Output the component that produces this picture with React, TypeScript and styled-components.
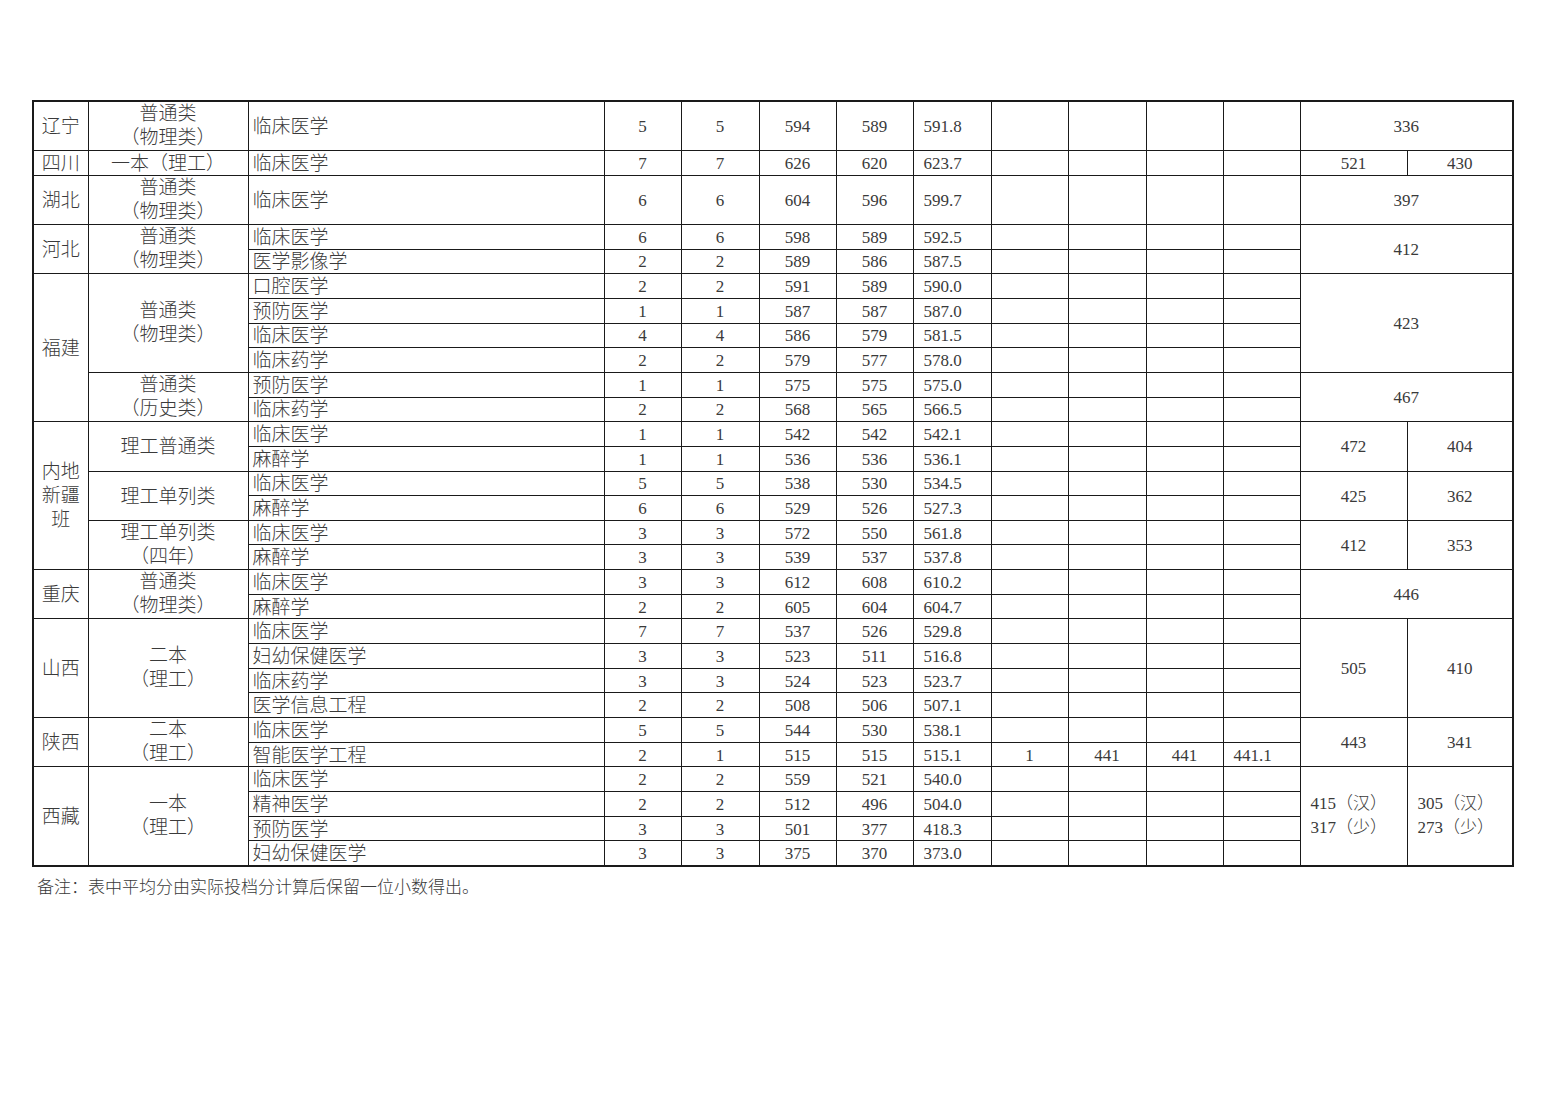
import React from 'react';
import styled, { createGlobalStyle } from 'styled-components';

const Global = createGlobalStyle`
  html, body {
    margin: 0;
    padding: 0;
    background: #fff;
  }
  body {
    font-family: "Liberation Serif", "Noto Sans CJK SC", serif;
    color: #333;
  }
`;

const Page = styled.div`
  padding: 100px 0 0 32px;
  width: 1480px;
`;

const Table = styled.table`
  width: 1480px;
  table-layout: fixed;
  border-collapse: collapse;
  border: 2px solid #1a1a1a;
`;

const Row = styled.tr<{ $tall?: boolean }>`
  height: ${(p) => (p.$tall ? '49.3px' : '24.66px')};
`;

const Cell = styled.td<{ $align?: 'left' | 'center'; $pad?: number; $cjk?: boolean; $multi?: boolean }>`
  border: 1.6px solid #1a1a1a;
  padding: ${(p) => (p.$multi ? 0 : 1)}px 0 0 ${(p) => p.$pad ?? 0}px;
  text-align: ${(p) => p.$align ?? 'center'};
  vertical-align: middle;
  font-size: ${(p) => (p.$cjk ? '19px' : '17px')};
  font-weight: 300;
  line-height: ${(p) => (p.$multi ? 24 : 21)}px;
  white-space: pre-line;
  overflow: hidden;
  color: #3a3a3a;
`;

const Note = styled.p`
  margin: 6px 0 0 5px;
  font-size: 17px;
  font-weight: 300;
  color: #3a3a3a;
`;

type Line = { span: number; vals: string[]; left?: boolean };
type Data = {
  prov?: [string, number];
  cat?: [string, number];
  major: string;
  n: string[];
  extra?: string[];
  tall?: boolean;
  line?: Line;
};

const rows: Data[] = [
  { prov: ['辽宁', 1], cat: ['普通类\n（物理类）', 1], major: '临床医学', n: ['5', '5', '594', '589', '591.8'], tall: true, line: { span: 1, vals: ['336'] } },
  { prov: ['四川', 1], cat: ['一本（理工）', 1], major: '临床医学', n: ['7', '7', '626', '620', '623.7'], line: { span: 1, vals: ['521', '430'] } },
  { prov: ['湖北', 1], cat: ['普通类\n（物理类）', 1], major: '临床医学', n: ['6', '6', '604', '596', '599.7'], tall: true, line: { span: 1, vals: ['397'] } },
  { prov: ['河北', 2], cat: ['普通类\n（物理类）', 2], major: '临床医学', n: ['6', '6', '598', '589', '592.5'], line: { span: 2, vals: ['412'] } },
  { major: '医学影像学', n: ['2', '2', '589', '586', '587.5'] },
  { prov: ['福建', 6], cat: ['普通类\n（物理类）', 4], major: '口腔医学', n: ['2', '2', '591', '589', '590.0'], line: { span: 4, vals: ['423'] } },
  { major: '预防医学', n: ['1', '1', '587', '587', '587.0'] },
  { major: '临床医学', n: ['4', '4', '586', '579', '581.5'] },
  { major: '临床药学', n: ['2', '2', '579', '577', '578.0'] },
  { cat: ['普通类\n（历史类）', 2], major: '预防医学', n: ['1', '1', '575', '575', '575.0'], line: { span: 2, vals: ['467'] } },
  { major: '临床药学', n: ['2', '2', '568', '565', '566.5'] },
  { prov: ['内地\n新疆\n班', 6], cat: ['理工普通类', 2], major: '临床医学', n: ['1', '1', '542', '542', '542.1'], line: { span: 2, vals: ['472', '404'] } },
  { major: '麻醉学', n: ['1', '1', '536', '536', '536.1'] },
  { cat: ['理工单列类', 2], major: '临床医学', n: ['5', '5', '538', '530', '534.5'], line: { span: 2, vals: ['425', '362'] } },
  { major: '麻醉学', n: ['6', '6', '529', '526', '527.3'] },
  { cat: ['理工单列类\n（四年）', 2], major: '临床医学', n: ['3', '3', '572', '550', '561.8'], line: { span: 2, vals: ['412', '353'] } },
  { major: '麻醉学', n: ['3', '3', '539', '537', '537.8'] },
  { prov: ['重庆', 2], cat: ['普通类\n（物理类）', 2], major: '临床医学', n: ['3', '3', '612', '608', '610.2'], line: { span: 2, vals: ['446'] } },
  { major: '麻醉学', n: ['2', '2', '605', '604', '604.7'] },
  { prov: ['山西', 4], cat: ['二本\n（理工）', 4], major: '临床医学', n: ['7', '7', '537', '526', '529.8'], line: { span: 4, vals: ['505', '410'] } },
  { major: '妇幼保健医学', n: ['3', '3', '523', '511', '516.8'] },
  { major: '临床药学', n: ['3', '3', '524', '523', '523.7'] },
  { major: '医学信息工程', n: ['2', '2', '508', '506', '507.1'] },
  { prov: ['陕西', 2], cat: ['二本\n（理工）', 2], major: '临床医学', n: ['5', '5', '544', '530', '538.1'], line: { span: 2, vals: ['443', '341'] } },
  { major: '智能医学工程', n: ['2', '1', '515', '515', '515.1'], extra: ['1', '441', '441', '441.1'] },
  { prov: ['西藏', 4], cat: ['一本\n（理工）', 4], major: '临床医学', n: ['2', '2', '559', '521', '540.0'], line: { span: 4, vals: ['415（汉）\n317（少）', '305（汉）\n273（少）'], left: true } },
  { major: '精神医学', n: ['2', '2', '512', '496', '504.0'] },
  { major: '预防医学', n: ['3', '3', '501', '377', '418.3'] },
  { major: '妇幼保健医学', n: ['3', '3', '375', '370', '373.0'] },
];

const widths = [55, 160, 356, 77, 78, 77, 77, 78, 77, 78, 77, 77, 107, 106];

const isMulti = (s: string) => s.includes('\n');

export default function App() {
  return (
    <Page>
      <Global />
      <Table>
        <colgroup>
          {widths.map((w, i) => (
            <col key={i} style={{ width: w }} />
          ))}
        </colgroup>
        <tbody>
          {rows.map((r, i) => {
            const extra = r.extra ?? ['', '', '', ''];
            return (
              <Row key={i} $tall={r.tall}>
                {r.prov && (
                  <Cell rowSpan={r.prov[1]} $cjk $multi={isMulti(r.prov[0])}>
                    {r.prov[0]}
                  </Cell>
                )}
                {r.cat && (
                  <Cell rowSpan={r.cat[1]} $cjk $multi={isMulti(r.cat[0])}>
                    {r.cat[0]}
                  </Cell>
                )}
                <Cell $align="left" $pad={4} $cjk>
                  {r.major}
                </Cell>
                {r.n.map((v, j) => (
                  <Cell key={j} $align={j === 4 ? 'left' : 'center'} $pad={j === 4 ? 10 : 0}>
                    {v}
                  </Cell>
                ))}
                {extra.map((v, j) => (
                  <Cell key={'e' + j} $align={j === 3 ? 'left' : 'center'} $pad={j === 3 ? 10 : 0}>
                    {v}
                  </Cell>
                ))}
                {r.line &&
                  (r.line.vals.length === 1 ? (
                    <Cell rowSpan={r.line.span} colSpan={2}>
                      {r.line.vals[0]}
                    </Cell>
                  ) : (
                    r.line.vals.map((v, j) => (
                      <Cell
                        key={'l' + j}
                        rowSpan={r.line!.span}
                        $align={r.line!.left ? 'left' : 'center'}
                        $pad={r.line!.left ? 10 : 0}
                        $multi={isMulti(v)}
                      >
                        {v}
                      </Cell>
                    ))
                  ))}
              </Row>
            );
          })}
        </tbody>
      </Table>
      <Note>备注：表中平均分由实际投档分计算后保留一位小数得出。</Note>
    </Page>
  );
}
